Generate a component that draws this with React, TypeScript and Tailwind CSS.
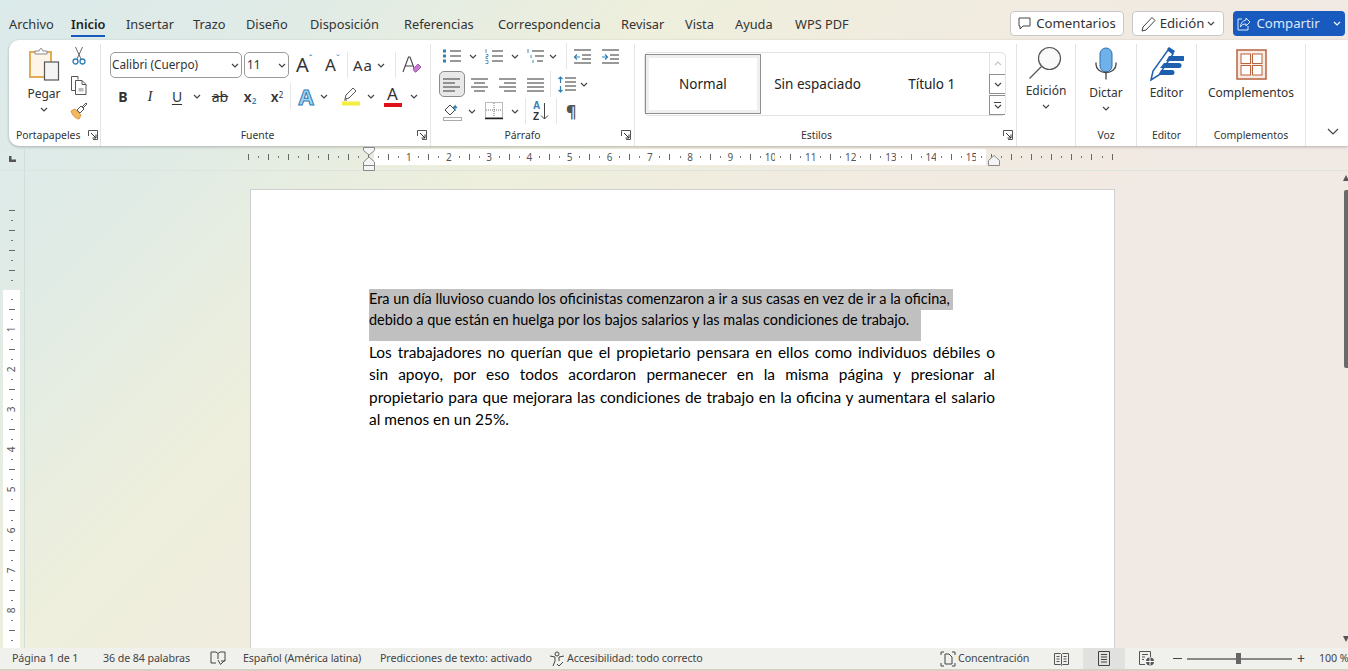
import type { ReactNode } from "react";

const tabs = [
  { name: "Archivo", w: "w-[62px]" },
  { name: "Inicio", w: "w-[55px]" },
  { name: "Insertar", w: "w-[67px]" },
  { name: "Trazo", w: "w-[53px]" },
  { name: "Diseño", w: "w-[64px]" },
  { name: "Disposición", w: "w-[94px]" },
  { name: "Referencias", w: "w-[94px]" },
  { name: "Correspondencia", w: "w-[123px]" },
  { name: "Revisar", w: "w-[64px]" },
  { name: "Vista", w: "w-[50px]" },
  { name: "Ayuda", w: "w-[60px]" },
  { name: "WPS PDF", w: "w-[70px]" },
];

function Chevron({ className = "" }: { className?: string }) {
  return (
    <svg width="8" height="5" viewBox="0 0 8 5" className={className} fill="none" stroke="#444" strokeWidth="1.2">
      <path d="M1 1l3 3 3-3" />
    </svg>
  );
}

function Launcher({ className = "" }: { className?: string }) {
  return (
    <svg width="10" height="10" viewBox="0 0 10 10" className={`absolute ${className}`} fill="none" stroke="#555" strokeWidth="1">
      <path d="M.5 6V.5h9v9H5" />
      <path d="M3 3l5 5M8 4.5V8H4.5" stroke="#333" />
    </svg>
  );
}

function Divider({ className = "" }: { className?: string }) {
  return <div className={`w-px bg-[#e6e6e6] ${className}`} />;
}

function Group({ label, className, labelClass = "text-center", children }: { label: string; className: string; labelClass?: string; children: ReactNode }) {
  return (
    <div className={`relative flex h-full shrink-0 flex-col border-r border-[#e4e4e4] ${className}`}>
      <div className="min-h-0 flex-1">{children}</div>
      <div className={`h-[18px] text-[10.4px] leading-[14px] text-[#333] ${labelClass}`}>{label}</div>
    </div>
  );
}

// lines of an alignment or list icon, given as [x1, x2, y]
function Lines({ rows, w = 20, h = 17, extra }: { rows: number[][]; w?: number; h?: number; extra?: ReactNode }) {
  return (
    <svg width={w} height={h} viewBox={`0 0 ${w} ${h}`} fill="none" stroke="#555" strokeWidth="1.2">
      {rows.map((r, i) => (
        <line key={i} x1={r[0]} x2={r[1]} y1={r[2]} y2={r[2]} />
      ))}
      {extra}
    </svg>
  );
}

function PasteIcon() {
  return (
    <svg width="32" height="34" viewBox="0 0 32 34" fill="none">
      <rect x="2" y="5" width="21" height="25" fill="#fdf6e8" stroke="#e2ac55" strokeWidth="2" />
      <path d="M7 7V4h4l1.500-2.500h1L15 4h4v3z" fill="#fff" stroke="#8a8a8a" />
      <rect x="16.500" y="15" width="14" height="18" fill="#f4f4f4" stroke="#555" strokeWidth="1.200" />
    </svg>
  );
}

function CutIcon() {
  return (
    <svg width="14" height="20" viewBox="0 0 14 20" fill="none">
      <path d="M3.500 1l5.500 12M10.500 1L5 13" stroke="#666" strokeWidth="1" />
      <circle cx="3.500" cy="15.500" r="2.500" stroke="#2f7fb5" strokeWidth="1.300" />
      <circle cx="10.500" cy="15.500" r="2.500" stroke="#2f7fb5" strokeWidth="1.300" />
    </svg>
  );
}

function CopyIcon() {
  return (
    <svg width="18" height="19" viewBox="0 0 18 19" fill="none" stroke="#555">
      <path d="M7 14.500H1.500v-14H8v3" />
      <path d="M5.500 4.500H12l4 4v10H5.500z" fill="#fff" />
      <path d="M12 4.500v4h4" />
      <rect x="8.500" y="12" width="5" height="3.500" fill="#bbb" stroke="none" />
    </svg>
  );
}

function PainterIcon() {
  return (
    <svg width="18" height="18" viewBox="0 0 18 18" fill="none">
      <path d="M1 9l4-2 6 6-2 4C6 17 2 13 1 9z" fill="#f0b860" stroke="#d9963a" />
      <path d="M7 8l4-4 3 3-4 4z" fill="#fff" stroke="#555" />
      <path d="M12 5l4-4 1 1-4 4" stroke="#555" />
    </svg>
  );
}

function EraserA() {
  return (
    <svg width="20" height="20" viewBox="0 0 20 20" fill="none">
      <path d="M1 17L6.500 2h1.500l4 11M3.500 11h7" stroke="#444" strokeWidth="1.100" />
      <path d="M11 14l5-5 3 3-5 5h-1z" fill="#c77bd0" stroke="#a855b5" />
    </svg>
  );
}

function Highlighter() {
  return (
    <svg width="20" height="20" viewBox="0 0 20 20" fill="none">
      <path d="M4 13l1-4 7-7 3 3-7 7z" fill="#fff" stroke="#555" />
      <path d="M3 14h3" stroke="#555" />
      <rect x="1" y="15.500" width="18" height="4" fill="#f6ee3c" />
    </svg>
  );
}

function ShadingIcon() {
  return (
    <svg width="20" height="19" viewBox="0 0 20 19" fill="none">
      <path d="M2 8l5-5 5 5-5 5z" stroke="#444" />
      <path d="M12 9V4l-2 2M12 4l2 2" stroke="#2f7fb5" strokeWidth="1.300" />
      <rect x=".5" y="15.500" width="18" height="3" stroke="#aaa" fill="#fff" />
    </svg>
  );
}

function BordersIcon() {
  return (
    <svg width="18" height="18" viewBox="0 0 18 18" fill="none" stroke="#777" strokeDasharray="1 1">
      <rect x=".5" y=".5" width="17" height="15" />
      <path d="M9 1v14M1 8h16" />
      <path d="M0 16.500h18" stroke="#222" strokeWidth="1.500" strokeDasharray="none" />
    </svg>
  );
}

function Magnifier() {
  return (
    <svg width="36" height="34" viewBox="0 0 36 34" fill="none" stroke="#555" strokeWidth="1.200">
      <circle cx="21.500" cy="12.500" r="11" fill="#fafafa" />
      <path d="M13.500 20.500L1.500 32.500" />
    </svg>
  );
}

function Mic() {
  return (
    <svg width="24" height="33" viewBox="0 0 24 33" fill="none">
      <rect x="6" y="1" width="12" height="24" rx="6" fill="#6fb2ea" stroke="#2d6fae" />
      <path d="M2 15.500v2a10 8 0 0 0 20 0v-2" stroke="#444" strokeWidth="1.300" />
      <path d="M12 25.500v7" stroke="#444" strokeWidth="1.300" />
    </svg>
  );
}

function EditorIcon() {
  return (
    <svg width="34" height="34" viewBox="0 0 34 34" fill="none">
      <path d="M1 33l2-9L18 3l5 4L9 28z" fill="#fff" stroke="#1f5fb0" strokeWidth="1.500" />
      <path d="M17 2l2-2 6 4-2 3z" fill="#1f5fb0" />
      <path d="M19 9h14a2 2 0 0 1 0 5H16zM14 16h15a2 2 0 0 1 0 5H10zM11 23h11a2 2 0 0 1 0 5H9z" fill="#1f5fb0" />
    </svg>
  );
}

function AddinsIcon() {
  return (
    <svg width="31" height="31" viewBox="0 0 31 31" fill="none" stroke="#b9633f">
      <rect x="1" y="1" width="29" height="29" strokeWidth="1.500" fill="#f7ebe4" />
      <rect x="5" y="5" width="9.500" height="9.500" fill="#fff" />
      <rect x="16.500" y="5" width="9.500" height="9.500" fill="#fff" />
      <rect x="5" y="16.500" width="9.500" height="9.500" fill="#fff" />
      <rect x="16.500" y="16.500" width="9.500" height="9.500" fill="#fff" />
    </svg>
  );
}

function ClipboardGroup() {
  return (
    <Group label="Portapapeles" className="w-[92px]" labelClass="pl-[7px] text-left">
      <Launcher className="left-[79px] bottom-[6px]" />
      <div className="flex pt-[3px] pl-[18px]">
        <div className="flex w-[34px] flex-col items-center text-[12px] text-[#333]">
          <PasteIcon />
          <span className="mt-[4px] leading-[18px]">Pegar</span>
          <Chevron className="mt-[4px]" />
        </div>
        <div className="ml-[1px] flex w-[34px] flex-col items-center">
          <div className="mt-[-1px]"><CutIcon /></div>
          <div className="mt-[10px]"><CopyIcon /></div>
          <div className="mt-[7px]"><PainterIcon /></div>
        </div>
      </div>
    </Group>
  );
}

function FontGroup() {
  const select = "flex h-[26px] items-center justify-between rounded-[5px] border border-[#9a9a9a] pl-[1px] pr-[2px] text-[11.800px] text-[#333]";
  return (
    <Group label="Fuente" className="w-[330px]" labelClass="pr-[16px] text-center">
      <Launcher className="right-[3px] bottom-[6px]" />
      <div className="pl-[9px] pt-[8px]">
        <div className="flex items-center">
          <div className={`${select} w-[132px]`}>Calibri (Cuerpo)<Chevron /></div>
          <div className={`${select} ml-[2px] w-[45px] pl-[2px]`}>11<Chevron /></div>
          <div className="ml-[7px] flex w-[20px] items-start text-[20px] leading-[24px] text-[#333]">A<span className="mt-[1px] text-[9px] leading-[10px] text-[#2f7fb5]">ˆ</span></div>
          <div className="ml-[9px] flex w-[20px] items-start text-[17px] leading-[24px] text-[#333]">A<span className="mt-[1px] text-[9px] leading-[10px] text-[#2f7fb5]">ˇ</span></div>
          <Divider className="ml-[2px] h-[26px]" />
          <div className="ml-[5px] flex w-[33px] items-center gap-[4px] text-[15px] tracking-[1px] text-[#333]">Aa<Chevron /></div>
          <Divider className="ml-[9px] h-[26px]" />
          <div className="ml-[6px]"><EraserA /></div>
        </div>
        <div className="mt-[5px] flex h-[26px] items-center text-[#333]">
          <div className="w-[26px] text-center font-bold text-[14px]">B</div>
          <div className="w-[28px] text-center font-['Liberation_Serif',serif] text-[15px] italic">I</div>
          <div className="w-[26px] text-center text-[14px] underline underline-offset-2">U</div>
          <div className="flex w-[14px] justify-center"><Chevron /></div>
          <div className="w-[32px] text-center text-[14px] line-through">ab</div>
          <div className="w-[28px] text-center text-[14px] font-semibold">x<sub className="text-[8px] text-[#2f7fb5]">2</sub></div>
          <div className="w-[26px] text-center text-[14px] font-semibold">x<sup className="text-[8px] font-normal">2</sup></div>
          <Divider className="h-[26px]" />
          <div className="ml-[2px] w-[26px] text-center text-[22px] font-bold leading-[24px] text-[#a6d5f2] [-webkit-text-stroke:1px_#2b7cb8]">A</div>
          <div className="flex w-[10px] justify-center"><Chevron /></div>
          <div className="flex w-[37px] justify-center pl-[6px]"><Highlighter /></div>
          <div className="flex w-[10px] justify-center"><Chevron /></div>
          <div className="flex w-[33px] flex-col items-center">
            <span className="text-[17px] leading-[18px]">A</span>
            <span className="h-[4px] w-[18px] bg-[#e0101a]" />
          </div>
          <div className="flex w-[10px] justify-center"><Chevron /></div>
        </div>
      </div>
    </Group>
  );
}

const bullets = [[8, 19, 3], [8, 19, 8], [8, 19, 13]];
const extraBullets = (
  <>
    <rect x="1" y="1.500" width="3" height="3" fill="#2f7fb5" stroke="none" />
    <rect x="1" y="6.500" width="3" height="3" fill="#2f7fb5" stroke="none" />
    <rect x="1" y="11.500" width="3" height="3" fill="#2f7fb5" stroke="none" />
  </>
);
const numbers = (
  <>
    <path d="M2 1v4M2 6.500h2v2H2v2h2M1.500 12.500h2.500v3h-2.500" stroke="#2f7fb5" strokeWidth=".8" />
  </>
);

function ParagraphGroup() {
  return (
    <Group label="Párrafo" className="w-[204px]" labelClass="pr-[20px] text-center">
      <Launcher className="right-[3px] bottom-[6px]" />
      <div className="pl-[8px] pt-[3px]">
        <div className="flex h-[18px] items-center">
          <div className="ml-[3px] w-[20px]"><Lines rows={bullets} extra={extraBullets} /></div>
          <div className="flex w-[22px] justify-center"><Chevron /></div>
          <div className="w-[20px]"><Lines rows={bullets} extra={numbers} /></div>
          <div className="flex w-[22px] justify-center"><Chevron /></div>
          <div className="w-[20px]"><Lines rows={[[6, 18, 3], [9, 18, 8], [11, 17, 13]]} extra={<path d="M2 1v4M5 7v3M7 12v3" stroke="#2f7fb5" strokeWidth=".9" />} /></div>
          <div className="flex w-[14px] justify-center"><Chevron /></div>
          <Divider className="ml-[6px] h-[26px]" />
          <div className="ml-[6px] w-[20px]"><Lines rows={[[1, 18, 2], [9, 18, 7], [9, 18, 11], [1, 18, 15]]} extra={<path d="M7 9H1.500M4 6.500L1.500 9 4 11.500" stroke="#2f7fb5" />} /></div>
          <div className="ml-[8px] w-[20px]"><Lines rows={[[1, 18, 2], [9, 18, 7], [9, 18, 11], [1, 18, 15]]} extra={<path d="M1 9h5.500M4 6.500L6.500 9 4 11.500" stroke="#2f7fb5" />} /></div>
        </div>
        <div className="mt-[6px] flex h-[26px] items-center">
          <div className="flex h-[26px] w-[26px] items-center justify-center rounded-[5px] border border-[#8c8c8c] bg-[#e8e8e8]"><Lines rows={[[1, 18, 3], [1, 13, 7], [1, 18, 11], [1, 13, 15]]} /></div>
          <div className="ml-[5px] w-[20px]"><Lines rows={[[1, 18, 3], [4, 15, 7], [1, 18, 11], [4, 15, 15]]} /></div>
          <div className="ml-[8px] w-[20px]"><Lines rows={[[1, 18, 3], [6, 18, 7], [1, 18, 11], [6, 18, 15]]} /></div>
          <div className="ml-[8px] w-[20px]"><Lines rows={[[1, 18, 3], [1, 18, 7], [1, 18, 11], [1, 18, 15]]} /></div>
          <Divider className="ml-[4px] h-[26px]" />
          <div className="ml-[6px] w-[20px]"><Lines rows={[[8, 19, 2], [8, 19, 6], [8, 19, 10], [8, 19, 14]]} extra={<path d="M3.500 1v6M1.500 3l2-2 2 2M3.500 10v6M1.500 14l2 2 2-2" stroke="#2f7fb5" />} /></div>
          <Chevron className="ml-[3px]" />
        </div>
        <div className="mt-[1px] flex h-[26px] items-center">
          <div className="ml-[4px] w-[20px]"><ShadingIcon /></div>
          <div className="flex w-[18px] justify-center"><Chevron /></div>
          <div className="ml-[4px] w-[20px]"><BordersIcon /></div>
          <div className="flex w-[20px] justify-center"><Chevron /></div>
          <Divider className="h-[26px]" />
          <div className="ml-[7px] flex w-[21px] items-center">
            <div className="flex flex-col font-['Liberation_Sans',sans-serif] text-[10px] font-bold leading-[11.500px]"><span className="text-[#2f7fb5]">A</span><span className="text-[#333]">Z</span></div>
            <svg width="9" height="18" viewBox="0 0 9 18" fill="none" stroke="#444"><path d="M4.500 1v16M1 13.500l3.500 3.500L8 13.500" /></svg>
          </div>
          <Divider className="ml-[2px] h-[26px]" />
          <div className="ml-[9px] text-[16px] font-bold text-[#555]">¶</div>
        </div>
      </div>
    </Group>
  );
}

function StylesGroup() {
  return (
    <Group label="Estilos" className="w-[382px]" labelClass="pr-[18px] text-center">
      <Launcher className="right-[3px] bottom-[6px]" />
      <div className="pl-[9px] pt-[8px]">
        <div className="flex h-[64px] w-[362px] rounded-[5px] border border-[#e2e2e2] text-[13.500px] text-[#222]">
          <div className="mt-[1px] flex h-[60px] w-[116px] items-center justify-center border border-[#8f8f8f] shadow-[inset_0_0_0_3px_#efefef]">Normal</div>
          <div className="flex w-[114px] items-center justify-center">Sin espaciado</div>
          <div className="flex w-[115px] items-center justify-center">Título 1</div>
          <div className="flex w-[16px] flex-col">
            <div className="flex h-[21px] items-center justify-center border-l border-[#e2e2e2]"><Chevron className="rotate-180 opacity-30" /></div>
            <div className="flex h-[20px] items-center justify-center border border-r-0 border-[#8f8f8f]"><Chevron /></div>
            <div className="mt-[1px] flex h-[20px] flex-col items-center justify-center border border-r-0 border-[#8f8f8f]">
              <span className="h-px w-[7px] bg-[#444]" />
              <Chevron className="mt-[1px]" />
            </div>
          </div>
        </div>
      </div>
    </Group>
  );
}

function BigButton({ label, group, width, icon, top, gap, chevron }: { label: string; group: string; width: string; icon: ReactNode; top: string; gap: string; chevron?: boolean }) {
  return (
    <Group label={group} className={width}>
      <div className={`flex flex-col items-center text-[12px] text-[#333] ${top}`}>
        {icon}
        <span className={`leading-[18px] ${gap}`}>{label}</span>
        {chevron && <Chevron className="mt-[4px]" />}
      </div>
    </Group>
  );
}

function Ribbon() {
  return (
    <div className="ml-[9px] flex h-[106px] shrink-0 rounded-l-[10px] bg-white pt-[4px] shadow-[0_1px_3px_rgba(0,0,0,0.25)]">
      <ClipboardGroup />
      <FontGroup />
      <ParagraphGroup />
      <StylesGroup />
      <BigButton label="Edición" group="" width="w-[59px]" icon={<Magnifier />} top="pt-[2px]" gap="mt-[2px]" chevron />
      <BigButton label="Dictar" group="Voz" width="w-[61px]" icon={<Mic />} top="pt-[3px]" gap="mt-[4px]" chevron />
      <BigButton label="Editor" group="Editor" width="w-[60px]" icon={<EditorIcon />} top="pt-[3px]" gap="mt-[3px]" />
      <BigButton label="Complementos" group="Complementos" width="w-[109px]" icon={<AddinsIcon />} top="pt-[5px]" gap="mt-[4px]" />
      <div className="flex flex-1 items-end justify-end pb-[11px] pr-[9px]">
        <svg width="12" height="7" viewBox="0 0 12 7" fill="none" stroke="#444" strokeWidth="1.200"><path d="M1 1l5 5 5-5" /></svg>
      </div>
    </div>
  );
}

function TopBar() {
  return (
    <div className="flex h-[40px] shrink-0 items-start pl-[9px] pr-[3px] pt-[11px]">
      <div className="flex flex-1 text-[12.800px] leading-[26px] text-[#333]">
        {tabs.map((t) => (
          <div key={t.name} className={t.w}>
            <span className={t.name === "Inicio" ? "inline-block h-[26px] border-b-2 border-[#185abd] font-semibold text-[#222]" : ""}>{t.name}</span>
          </div>
        ))}
      </div>
      <div className="flex h-[25px] w-[114px] items-center justify-center gap-[5px] rounded-[4px] border border-[#c8c8c8] bg-white text-[13.200px] text-[#333]">
        <svg width="13" height="13" viewBox="0 0 13 13" fill="none" stroke="#444"><path d="M1 1h11v8H5l-3 3V9H1z" /></svg>
        Comentarios
      </div>
      <div className="ml-[8px] flex h-[25px] w-[92px] items-center justify-center gap-[3px] rounded-[4px] border border-[#c8c8c8] bg-white text-[13.200px] text-[#333]">
        <svg width="16" height="16" viewBox="0 0 16 16" fill="none" stroke="#444"><path d="M1 15l1-4 9-9.500 3 3L5 14z" /></svg>
        Edición
        <Chevron />
      </div>
      <div className="ml-[9px] flex h-[25px] w-[112px] items-center justify-center gap-[5px] rounded-[4px] bg-[#185abd] text-[13.200px] text-[#dfe9f7]">
        <svg width="14" height="14" viewBox="0 0 14 14" fill="none" stroke="#dfe9f7"><path d="M9 1l4 4-4 4V7C6 7 4.500 8 3.500 10 3.500 6 6 3.500 9 3zM5 2H1v11h10V9" /></svg>
        Compartir
        <svg width="8" height="5" viewBox="0 0 8 5" fill="none" stroke="#fff" strokeWidth="1.200" className="ml-[8px]"><path d="M1 1l3 3 3-3" /></svg>
      </div>
    </div>
  );
}

const hTicks = Array.from({ length: 87 }, (_, i) => i - 12);

function HorizontalRuler() {
  return (
    <div className="relative flex h-[24px] shrink-0 border-b border-[#dde3de]">
      <div className="flex w-[25px] shrink-0 items-end border-r border-[#d3dedb] pb-[8px] pl-[9px]">
        <svg width="7" height="6" viewBox="0 0 7 6" fill="#555"><path d="M0 0h2.500v3.500H7V6H0z" /></svg>
      </div>
      <div className="ml-[218px] mt-[2px] flex h-[16px]">
        {hTicks.map((i) => {
          const num = i > 0 && i % 4 === 0 && i <= 60 ? i / 4 : 0;
          return (
            <div key={i} className={`flex w-[10.05px] items-center justify-center text-[10px] text-[#555] ${i > 0 && i < 62 ? "bg-white" : ""}`}>
              {num ? num : <span className={i % 2 === 0 ? "h-[6px] w-px bg-[#666]" : "h-[2px] w-px bg-[#777]"} />}
            </div>
          );
        })}
      </div>
      <svg width="12" height="24" viewBox="0 0 12 24" className="absolute left-[363px] top-0" fill="#f5f5f5" stroke="#888">
        <path d="M.5.500h11v3L6 8 .5 3.500zM6 10l5.500 5v8.500H.5V15zM.5 18.500h11" />
      </svg>
      <svg width="12" height="11" viewBox="0 0 12 11" className="absolute left-[988px] top-[8px]" fill="#f5f5f5" stroke="#888">
        <path d="M6 .5l5.500 5v5H.5v-5z" />
      </svg>
    </div>
  );
}

function VTick({ i }: { i: number }) {
  const num = i > 0 && i % 4 === 0 ? i / 4 : 0;
  return (
    <div className="flex h-[10.05px] shrink-0 items-center justify-center text-[10px] text-[#555]">
      {num ? <span className="-rotate-90">{num}</span> : <span className={i % 2 === 0 ? "h-px w-[6px] bg-[#666]" : "h-px w-[2px] bg-[#777]"} />}
    </div>
  );
}

function VerticalRuler() {
  return (
    <div className="flex w-[25px] shrink-0 flex-col border-r border-[#d3dedb] pl-[3px] pr-[4px]">
      <div className="flex h-[119px] shrink-0 flex-col justify-end pb-[4px]">
        {[-8, -7, -6, -5, -4, -3, -2, -1].map((i) => <VTick key={i} i={i} />)}
      </div>
      <div className="flex min-h-0 flex-1 flex-col overflow-hidden bg-white pt-[4px]">
        {Array.from({ length: 35 }, (_, i) => i + 1).map((i) => <VTick key={i} i={i} />)}
      </div>
    </div>
  );
}

const justified = "whitespace-nowrap text-justify [text-align-last:justify]";

function Page() {
  return (
    <div className="ml-[225px] mt-[18px] w-[865px] border border-b-0 border-[#cfcfcf] bg-white pl-[118px] pr-[119px] pt-[99px] font-['Lato',sans-serif] text-black">
      <div className="whitespace-nowrap text-[14.470px]">
        <div className="h-[21px] w-[584px] bg-[#c0c0c0] leading-[19px]">Era un día lluvioso cuando los oficinistas comenzaron a ir a sus casas en vez de ir a la oficina,</div>
        <div className="h-[31px] w-[552px] bg-[#c0c0c0] leading-[20px]">debido a que están en huelga por los bajos salarios y las malas condiciones de trabajo.</div>
      </div>
      <div className="text-[15.440px] leading-[22.300px]">
        <div className={justified}>Los trabajadores no querían que el propietario pensara en ellos como individuos débiles o</div>
        <div className={justified}>sin apoyo, por eso todos acordaron permanecer en la misma página y presionar al</div>
        <div className={justified}>propietario para que mejorara las condiciones de trabajo en la oficina y aumentara el salario</div>
        <div>al menos en un 25%.</div>
      </div>
    </div>
  );
}

function Scrollbar() {
  return (
    <div className="flex w-[4px] shrink-0 flex-col items-end pt-[4px]">
      <svg width="6" height="6" viewBox="0 0 6 6" fill="#555" className="-mr-[1px] shrink-0"><path d="M3 0l3 6H0z" /></svg>
      <div className="mt-[9px] h-[178px] w-[4px] shrink-0 rounded-l-[2px] bg-[#6a6a6a]" />
      <svg width="6" height="6" viewBox="0 0 6 6" fill="#555" className="-mr-[1px] mt-[268px] shrink-0"><path d="M0 0h6L3 6z" /></svg>
    </div>
  );
}

function StatusBar() {
  return (
    <div className="flex h-[23px] shrink-0 items-center border-b-2 border-[#d6cfc4] bg-[#f0f1ed] pl-[12px] text-[10.700px] tracking-[-0.1px] text-[#444]">
      <span className="w-[91px]">Página 1 de 1</span>
      <span className="w-[107px]">36 de 84 palabras</span>
      <svg width="16" height="15" viewBox="0 0 16 15" fill="none" stroke="#444"><path d="M1 1h5l2 1.500L10 1h5v9h-4M8 2.500V8M1 1v11h5M8 9l2.500 4.500L15 9" /></svg>
      <span className="ml-[17px] w-[137px]">Español (América latina)</span>
      <span className="w-[169px]">Predicciones de texto: activado</span>
      <svg width="16" height="16" viewBox="0 0 16 16" fill="none" stroke="#444" className="mr-[2px]"><circle cx="8" cy="3" r="2" /><path d="M1 5l5 1v4l-2 5M15 5l-5 1v4M8 13l2 2 4-4" /></svg>
      <span>Accesibilidad: todo correcto</span>
      <div className="ml-auto flex h-full items-center">
        <svg width="16" height="16" viewBox="0 0 16 16" fill="none" stroke="#444"><path d="M1 4V1h3M12 1h3v3M15 12v3h-3M4 15H1v-3" /><path d="M5 3h4l3 3v7H5z" /></svg>
        <span className="ml-[2px] w-[96px]">Concentración</span>
        <svg width="15" height="14" viewBox="0 0 15 14" fill="none" stroke="#555"><path d="M.5 1.500h6l1 1 1-1h6v11h-6l-1 1-1-1h-6zM7.500 2.500v10M2.500 4.500h3M2.500 7h3M2.500 9.500h3M9.500 4.500h3M9.500 7h3M9.500 9.500h3" /></svg>
        <div className="ml-[14px] flex h-full w-[42px] items-center justify-center bg-[#e1e2e0]">
          <svg width="12" height="15" viewBox="0 0 12 15" fill="none" stroke="#444"><path d="M.5.500h11v14H.5zM3 3.500h6M3 6h6M3 8.500h6M3 11h6" /></svg>
        </div>
        <svg width="16" height="15" viewBox="0 0 16 15" fill="none" stroke="#555" className="ml-[14px]"><path d="M6 13.500H.5V.5h11V6M3 3.500h6M3 6h3M3 8.500h2" /><circle cx="11" cy="10.500" r="4" fill="#555" stroke="none" /><path d="M7 10.500h8M11 6.500v8" stroke="#fff" /></svg>
        <span className="ml-[18px] h-px w-[9px] bg-[#444]" />
        <div className="relative ml-[5px] flex h-full w-[105px] items-center">
          <div className="h-[2px] w-full bg-[#888]" />
          <span className="absolute left-[49px] h-[11px] w-[5px] bg-[#666]" />
        </div>
        <span className="ml-[5px] w-[8px] text-[14px] leading-none">+</span>
        <span className="ml-[14px] w-[29px] whitespace-nowrap">100 %</span>
      </div>
    </div>
  );
}

export default function App() {
  return (
    <div className="flex h-[671px] w-[1348px] flex-col overflow-hidden bg-[linear-gradient(135deg,#dbeaea_0%,#e0ebe6_15%,#eeefdc_33%,#f1ebe0_50%,#f1e9e4_70%)] font-['Noto_Sans',sans-serif]">
      <TopBar />
      <Ribbon />
      <div className="h-[1px] shrink-0" />
      <HorizontalRuler />
      <div className="flex min-h-0 flex-1">
        <VerticalRuler />
        <div className="flex min-w-0 flex-1 overflow-hidden"><Page /></div>
        <Scrollbar />
      </div>
      <StatusBar />
    </div>
  );
}
